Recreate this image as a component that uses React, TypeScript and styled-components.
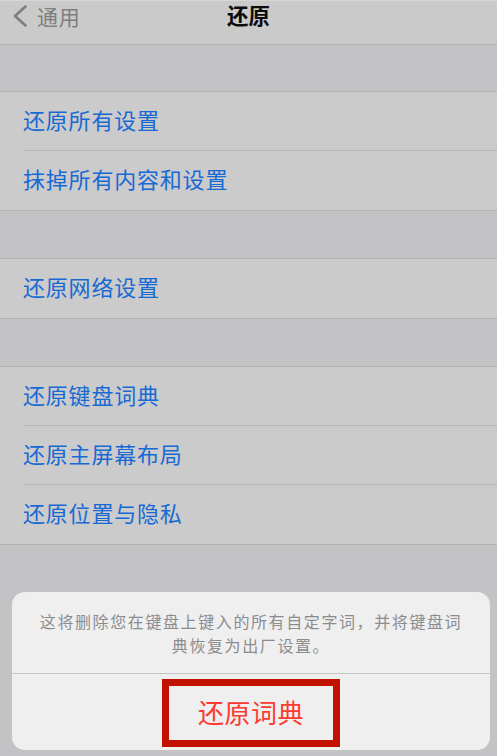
import React, { FC } from "react";
import styled, { createGlobalStyle } from "styled-components";

const GlobalStyle = createGlobalStyle`
  html, body {
    margin: 0;
    padding: 0;
    background: #c3c3c5;
  }
  body {
    font-family: "Noto Sans CJK SC", "Noto Sans", sans-serif;
  }
`;

const Screen = styled.div`
  position: relative;
  width: 497px;
  min-height: 756px;
  background: #c3c3c5;
  overflow: hidden;
`;

const NavBar = styled.div`
  position: relative;
  height: 43px;
  background: #cacaca;
  border-top: 1px solid #d6d6d6;
  border-bottom: 1px solid #b0b0b0;
  display: flex;
  align-items: flex-start;
  justify-content: center;
`;

const BackButton = styled.div`
  position: absolute;
  left: 12px;
  top: 4px;
  display: flex;
  align-items: center;
  gap: 10px;
  color: #7e7e7e;
  font-size: 21px;
  line-height: 22px;
  letter-spacing: 0.8px;
`;

const Title = styled.div`
  margin-top: 1px;
  font-size: 21.5px;
  line-height: 26px;
  font-weight: 700;
  color: #0b0b0b;
`;

const Gap = styled.div<{ $h: number }>`
  height: ${(p) => p.$h}px;
`;

const Group = styled.ul`
  list-style: none;
  margin: 0;
  padding: 0;
  background: #cbcbcb;
  border-top: 1px solid #b3b3b3;
  border-bottom: 1px solid #b3b3b3;
`;

const Row = styled.li`
  position: relative;
  height: 59px;
  box-sizing: border-box;
  padding: 0 0 5px 23px;
  display: flex;
  align-items: center;
  color: #1769d4;
  font-size: 22px;
  letter-spacing: 0.8px;

  &:not(:last-child)::after {
    content: "";
    position: absolute;
    left: 23px;
    right: 0;
    bottom: 0;
    height: 1px;
    background: #b5b5b5;
  }
`;

const Sheet = styled.div`
  position: absolute;
  left: 12px;
  top: 592px;
  width: 478px;
  height: 158px;
  background: #efeff0;
  border-radius: 13px;
  display: flex;
  flex-direction: column;
  overflow: hidden;
`;

const Message = styled.div`
  height: 82px;
  box-sizing: border-box;
  padding: 17px 26px 0;
  text-align: center;
  color: #8c8c8f;
  font-size: 16px;
  line-height: 24px;
  letter-spacing: 1.6px;
  border-bottom: 1px solid #c6c6c9;
`;

const ActionButton = styled.div`
  flex: 1;
  display: flex;
  justify-content: center;
  padding-top: 5px;
`;

const Highlight = styled.div`
  width: 178px;
  height: 68px;
  box-sizing: border-box;
  border: 7px solid #c11200;
  padding-bottom: 3px;
  display: flex;
  align-items: center;
  justify-content: center;
  color: #fb3b30;
  font-size: 26px;
  letter-spacing: 0.5px;
`;

const groups = [
  ["还原所有设置", "抹掉所有内容和设置"],
  ["还原网络设置"],
  ["还原键盘词典", "还原主屏幕布局", "还原位置与隐私"],
];

const App: FC = () => {
  return (
    <Screen>
      <GlobalStyle />
      <NavBar>
        <BackButton>
          <svg width="15" height="22" viewBox="0 0 15 22">
            <path
              d="M13.5 1.5 L3 11 L13.5 20.5"
              fill="none"
              stroke="#7e7e7e"
              strokeWidth="2.6"
              strokeLinecap="round"
              strokeLinejoin="round"
            />
          </svg>
          通用
        </BackButton>
        <Title>还原</Title>
      </NavBar>
      {groups.map((g, i) => (
        <React.Fragment key={i}>
          <Gap $h={i === 0 ? 46 : 47} />
          <Group>
            {g.map((t) => (
              <Row key={t}>{t}</Row>
            ))}
          </Group>
        </React.Fragment>
      ))}
      <Sheet>
        <Message>
          这将删除您在键盘上键入的所有自定字词，并将键盘词典恢复为出厂设置。
        </Message>
        <ActionButton>
          <Highlight>还原词典</Highlight>
        </ActionButton>
      </Sheet>
    </Screen>
  );
};

export default App;
